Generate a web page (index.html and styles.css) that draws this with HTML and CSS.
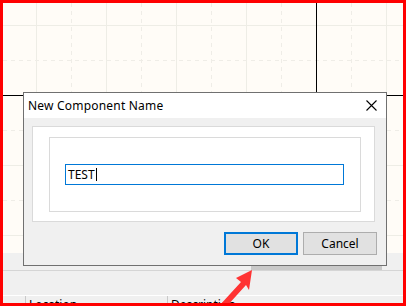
FILE: index.html
```html
<!DOCTYPE html>
<html lang="en">
<head>
    <meta charset="UTF-8">
    <title>New Component Name</title>
    <link rel="stylesheet" href="styles.css">
</head>
<body>
    <div class="frame">
        <div class="canvas">
            <svg class="grid" width="400" height="250" viewBox="3 3 400 250">
                <g stroke="#eeede6" stroke-width="1">
                    <line x1="36.5" y1="3" x2="36.5" y2="253"/>
                    <line x1="106.5" y1="3" x2="106.5" y2="253"/>
                    <line x1="176.5" y1="3" x2="176.5" y2="253"/>
                    <line x1="246.5" y1="3" x2="246.5" y2="253"/>
                    <line x1="386.5" y1="3" x2="386.5" y2="253"/>
                    <line x1="3" y1="25.5" x2="403" y2="25.5"/>
                    <line x1="3" y1="165.5" x2="403" y2="165.5"/>
                    <line x1="3" y1="235.5" x2="403" y2="235.5"/>
                </g>
                <g stroke="#efede7" stroke-width="1" stroke-dasharray="4 4">
                    <line x1="71.5" y1="3" x2="71.5" y2="253"/>
                    <line x1="141.5" y1="3" x2="141.5" y2="253"/>
                    <line x1="211.5" y1="3" x2="211.5" y2="253"/>
                    <line x1="281.5" y1="3" x2="281.5" y2="253"/>
                    <line x1="351.5" y1="3" x2="351.5" y2="253"/>
                    <line x1="3" y1="60.5" x2="403" y2="60.5"/>
                    <line x1="3" y1="130.5" x2="403" y2="130.5"/>
                    <line x1="3" y1="200.5" x2="403" y2="200.5"/>
                </g>
                <g stroke="#000" stroke-width="1">
                    <line x1="316.5" y1="3" x2="316.5" y2="96"/>
                    <line x1="3" y1="95.5" x2="403" y2="95.5"/>
                </g>
            </svg>
        </div>
        <div class="panel">
            <div class="toolbar"></div>
            <div class="spacer"></div>
            <div class="headers">
                <div class="col first"></div>
                <div class="col loc">Location</div>
                <div class="col desc">Description</div>
            </div>
        </div>

        <div class="scroll-shadow"></div>

        <div class="dialog">
            <div class="titlebar">
                <span class="title">New Component Name</span>
                <svg class="close" width="11" height="11" viewBox="0 0 11 11">
                    <path d="M0.5 0.5 L10.5 10.5 M10.5 0.5 L0.5 10.5" stroke="#000" stroke-width="1.1" fill="none"/>
                </svg>
            </div>
            <div class="body">
                <div class="outer">
                    <div class="inner">
                        <div class="field">TEST<span class="caret"></span></div>
                    </div>
                </div>
                <div class="buttons">
                    <button class="btn default">OK</button>
                    <button class="btn">Cancel</button>
                </div>
            </div>
        </div>

        <svg class="arrow" width="400" height="300" viewBox="3 3 400 300">
            <polygon fill="#ff3333" points="252,270 236,278 241,282 219,306 227,306 246,285 249,290"/>
        </svg>
    </div>
</body>
</html>
```

FILE: styles.css
```css
body {
    margin: 0;
    font-family: "Noto Sans", "Open Sans", sans-serif;
    font-size: 12px;
    color: #000;
}

.frame {
    position: relative;
    width: 400px;
    height: 300px;
    border: 3px solid #ff0000;
    overflow: hidden;
    display: flex;
    flex-direction: column;
}

.canvas {
    height: 250px;
    background: #fffcf7;
    flex: none;
}

.grid {
    display: block;
}

.panel {
    flex: 1;
    background: #f0f0f0;
    display: flex;
    flex-direction: column;
}

.toolbar {
    height: 17px;
    border-bottom: 1px solid #d5d5d5;
}

.spacer {
    height: 24px;
    border-bottom: 1px solid #ffffff;
}

.headers {
    display: flex;
    flex: 1;
}

.col {
    box-sizing: border-box;
    border-right: 1px solid #c9c9c9;
    padding: 2px 0 0 3px;
    line-height: 14px;
}

.col.first {
    width: 23px;
}

.col.loc {
    width: 142px;
}

.col.desc {
    flex: 1;
    border-right: none;
}

.scroll-shadow {
    position: absolute;
    left: 248px;
    top: 263px;
    width: 131px;
    height: 4px;
    background: #c9c9c9;
}

.dialog {
    position: absolute;
    left: 20px;
    top: 89px;
    width: 364px;
    height: 174px;
    box-sizing: border-box;
    border: 1px solid #707070;
    background: #f0f0f0;
    display: flex;
    flex-direction: column;
}

.titlebar {
    height: 25px;
    background: #fff;
    display: flex;
    align-items: center;
    justify-content: space-between;
    padding: 0 9px 0 4px;
}

.title {
    font-size: 12px;
    letter-spacing: 0.2px;
}

.close {
    display: block;
}

.body {
    padding: 8px 11px 0 8px;
}

.outer {
    height: 96px;
    box-sizing: border-box;
    border: 1px solid #dadada;
    background: #fff;
    display: flex;
    flex-direction: column;
}

.inner {
    flex: 1;
    margin: 10px 13px 9px 16px;
    border: 1px solid #dadada;
}

.field {
    margin: 26px 0 0 15px;
    width: 279px;
    height: 21px;
    box-sizing: border-box;
    border: 1px solid #0078d7;
    padding-left: 2px;
    line-height: 19px;
    display: flex;
    align-items: center;
}

.caret {
    display: inline-block;
    width: 1px;
    height: 13px;
    background: #000;
    margin-left: 1px;
}

.buttons {
    display: flex;
    justify-content: flex-end;
    gap: 5px;
    margin-top: 10px;
    margin-right: -2px;
}

.btn {
    width: 74px;
    height: 23px;
    box-sizing: border-box;
    background: #e1e1e1;
    border: 1px solid #adadad;
    font-family: "Noto Sans", "Open Sans", sans-serif;
    font-size: 12px;
    padding: 0;
    color: #000;
}

.btn.default {
    border: 2px solid #0078d7;
}

.arrow {
    position: absolute;
    left: 0;
    top: 0;
    pointer-events: none;
}
```
